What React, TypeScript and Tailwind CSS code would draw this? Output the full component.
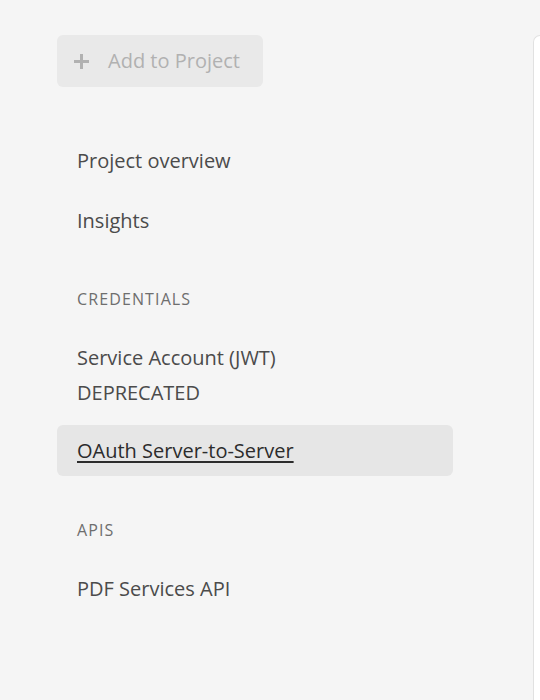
import React from 'react';

const NavItem: React.FC<{ label: React.ReactNode; active?: boolean }> = ({ label, active }) => (
  <div
    className={`px-5 py-2 rounded-[6px] text-[20px] leading-[35px] ${
      active ? 'bg-[#e6e6e6] text-[#2c2c2c] underline underline-offset-[3px] decoration-[1.5px]' : 'text-[#4b4b4b]'
    }`}
  >
    {label}
  </div>
);

const Heading: React.FC<{ children: React.ReactNode }> = ({ children }) => (
  <div className="px-5 text-[16px] tracking-[0.07em] text-[#6e6e6e] leading-[20px]">{children}</div>
);

export default function App() {
  return (
    <div
      className="w-[540px] h-[700px] bg-[#f5f5f5] flex overflow-hidden"
      style={{ fontFamily: '"Open Sans", "Noto Sans", sans-serif' }}
    >
      <aside className="w-[396px] ml-[57px] pt-[35px] flex flex-col">
        <button className="self-start h-[52px] w-[206px] rounded-[6px] bg-[#e9e9e9] flex items-center gap-[18px] pl-[16px] text-[20px] text-[#b1b1b1]">
          <svg width="17" height="17" viewBox="0 0 17 17" fill="none">
            <path d="M8.5 1v15M1 8.5h15" stroke="#b1b1b1" strokeWidth="3" />
          </svg>
          <span>Add to Project</span>
        </button>

        <nav className="mt-[48px] flex flex-col">
          <NavItem label="Project overview" />
          <div className="mt-[9px]">
            <NavItem label="Insights" />
          </div>
          <div className="mt-[43px]">
            <Heading>CREDENTIALS</Heading>
          </div>
          <div className="mt-[23px]">
            <NavItem
              label={
                <>
                  Service Account (JWT)
                  <br />
                  DEPRECATED
                </>
              }
            />
          </div>
          <div className="mt-[7px]">
            <NavItem label="OAuth Server-to-Server" active />
          </div>
          <div className="mt-[44px]">
            <Heading>APIS</Heading>
          </div>
          <div className="mt-[23px]">
            <NavItem label="PDF Services API" />
          </div>
        </nav>
      </aside>

      <div className="ml-auto mt-[35px] w-[7px] h-[700px] bg-white border-l border-t border-[#e1e1e1] rounded-tl-[8px]" />
    </div>
  );
}
